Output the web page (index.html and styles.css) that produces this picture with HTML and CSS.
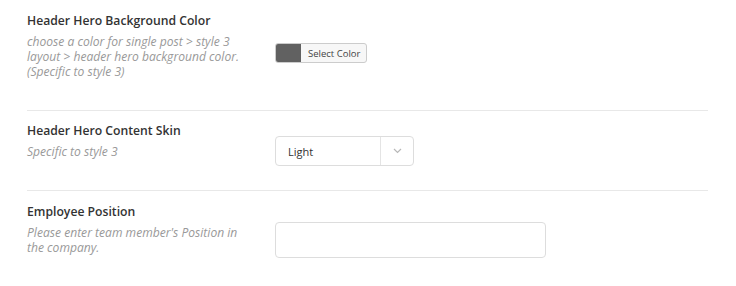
FILE: index.html
```html
<!DOCTYPE html>
<html lang="en" dir="ltr">
  <head>
    <meta charset="utf-8">
    <title>Single Post Options</title>
    <link rel="stylesheet" href="styles.css">
  </head>
  <body>
    <div class="options">
      <div class="option option-color">
        <div class="option-label">
          <h4>Header Hero Background Color</h4>
          <p>choose a color for single post &gt; style 3 layout &gt; header hero background color. (Specific to style 3)</p>
        </div>
        <div class="option-control">
          <button type="button" class="color-picker">
            <span class="swatch"></span>
            <span class="picker-text">Select Color</span>
          </button>
        </div>
      </div>

      <div class="option option-skin">
        <div class="option-label">
          <h4>Header Hero Content Skin</h4>
          <p>Specific to style 3</p>
        </div>
        <div class="option-control">
          <div class="select">
            <span class="select-value">Light</span>
            <span class="select-arrow">
              <svg width="9" height="6" viewBox="0 0 9 6"><path d="M1 1 L4.5 4.5 L8 1" fill="none" stroke="#b8b8b8" stroke-width="1.2"/></svg>
            </span>
          </div>
        </div>
      </div>

      <div class="option option-text">
        <div class="option-label">
          <h4>Employee Position</h4>
          <p>Please enter team member's Position in the company.</p>
        </div>
        <div class="option-control">
          <input type="text" class="text-input">
        </div>
      </div>
    </div>
  </body>
</html>
```

FILE: styles.css
```css
/* Option panel, Open Sans like the admin theme */
body {
  margin: 0;
  background-color: #fff;
  font-family: "Open Sans", "Liberation Sans", Arial, sans-serif;
}

.options {
  margin-left: 27px;
  width: 681px;
}

.option {
  display: flex;
  align-items: flex-start;
  border-bottom: 1px solid #e8e8e8;
}

.option:last-child {
  border-bottom: none;
}

.option-label {
  width: 220px;
  margin-right: 28px;
}

.option-label h4 {
  margin: 0;
  font-size: 12.2px;
  line-height: 16px;
  font-weight: 600;
  color: #333;
}

.option-label p {
  margin: 5px 0 0;
  font-size: 12.1px;
  line-height: 15px;
  font-style: italic;
  color: #999;
}

/* rows */
.option-color {
  padding: 13px 0 31px;
}

.option-color .option-control {
  margin-top: 30px;
}

.option-skin {
  padding: 12px 0 24px;
}

.option-skin .option-control {
  margin-top: 13px;
}

.option-text {
  padding-top: 13px;
}

.option-text .option-control {
  margin-top: 18px;
}

/* color picker */
.color-picker {
  display: flex;
  align-items: stretch;
  height: 20px;
  padding: 0;
  border: 1px solid #ccc;
  border-radius: 3px;
  background-color: #f7f7f7;
  cursor: pointer;
  font-family: inherit;
}

.swatch {
  width: 25px;
  background-color: #616161;
  border-radius: 2px 0 0 2px;
}

.picker-text {
  display: flex;
  align-items: center;
  padding: 0 6px 0 7px;
  font-size: 9.5px;
  color: #444;
}

/* select */
.select {
  display: flex;
  width: 137px;
  height: 28px;
  border: 1px solid #ddd;
  border-radius: 4px;
  background-color: #fff;
}

.select-value {
  flex: 1;
  display: flex;
  align-items: center;
  padding-left: 12px;
  font-size: 11px;
  color: #333;
}

.select-arrow {
  width: 32px;
  display: flex;
  align-items: center;
  justify-content: center;
  border-left: 1px solid #e4e4e4;
}

/* text input */
.text-input {
  box-sizing: border-box;
  width: 271px;
  height: 36px;
  margin: 0;
  border: 1px solid #ddd;
  border-radius: 4px;
  background-color: #fff;
  outline: none;
}
```
